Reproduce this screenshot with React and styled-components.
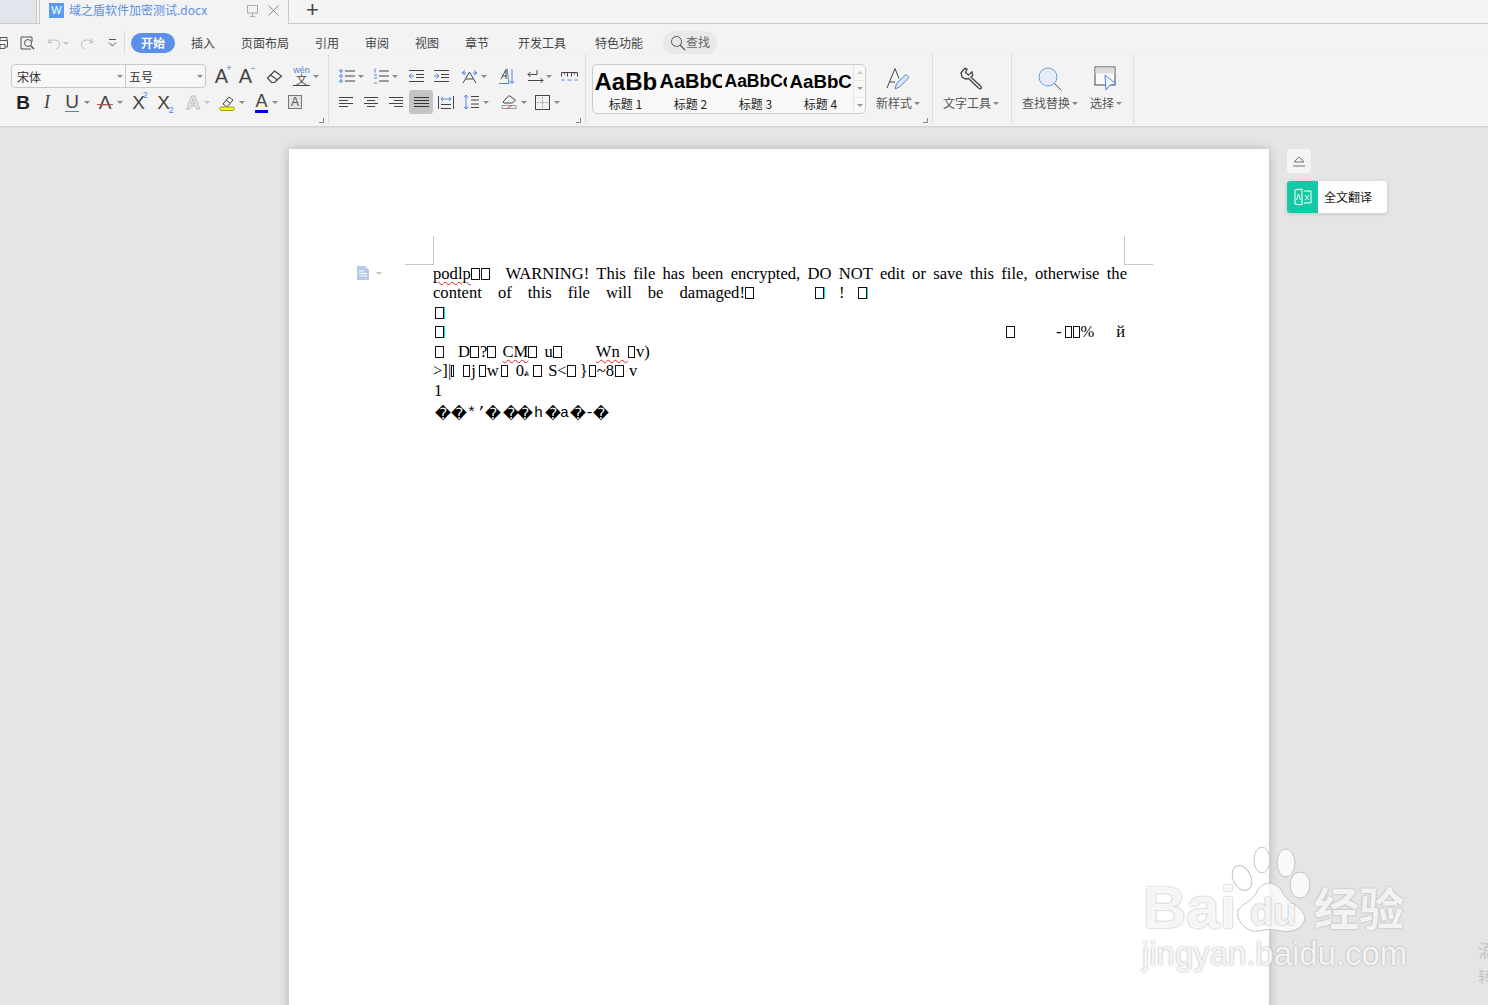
import React from 'react';
import styled, { createGlobalStyle } from 'styled-components';

const ui = '"Noto Sans CJK SC", "Noto Sans", sans-serif';

const Global = createGlobalStyle`
  html, body { margin: 0; padding: 0; height: 100%; overflow: hidden; }
  body { font-family: ${ui}; background: #e5e5e5; }
`;

const Ico = ({ w = 16, h = 16, children }) => (
  <Glyph width={w} height={h} viewBox={`0 0 ${w} ${h}`}>{children}</Glyph>
);

const TABS = [
  ['插入', 16, 24], ['页面布局', 26, 48], ['引用', 26, 24], ['审阅', 26, 24],
  ['视图', 26, 24], ['章节', 26, 24], ['开发工具', 29, 48], ['特色功能', 29, 48],
];

const STYLES = [
  ['AaBb', 24, '标题 1'], ['AaBbC', 20, '标题 2'], ['AaBbCc', 17.5, '标题 3'], ['AaBbC', 18.7, '标题 4'],
];

const App = () => (
  <Page>
    <Global />
    <TabBar>
      <OldTab />
      <ActiveTab>
        <DocBadge>W</DocBadge>
        <TabTitle>域之盾软件加密测试.docx</TabTitle>
        <Slot $l={37} $w={13}>
          <Ico w={13} h={13}><rect x="1.5" y="1.5" width="10" height="7.5" stroke="#aaa" /><path d="M6.5 9v3M4 12.5h5" stroke="#aaa" /></Ico>
        </Slot>
        <Slot $l={8} $w={13}>
          <Ico w={13} h={13}><path d="M1.5 1.5l10 10M11.5 1.5l-10 10" stroke="#888" /></Ico>
        </Slot>
      </ActiveTab>
      <Plus>+</Plus>
    </TabBar>

    <MenuBar>
      <Slot $l={-3} $w={12}>
        <Ico w={12} h={14}><path d="M3 4V1.5h7V4M3 11H.5V4.5h10V11H8M3 8.5h5v4H3z" stroke="#555" /></Ico>
      </Slot>
      <Slot $l={11} $w={15}>
        <Ico w={16} h={15}><path d="M11 13H1V1h11v5" stroke="#555" /><circle cx="8" cy="7" r="3.5" stroke="#555" /><path d="M10.5 9.5l3.5 3.5" stroke="#555" strokeWidth="1.4" /></Ico>
      </Slot>
      <Slot $l={12} $w={13}>
        <Ico w={14} h={13}><path d="M3 1.5L1 5l4 1M1.5 5C4 2.5 11 2 12.5 6c.8 2.500-1 5-3.500 6" stroke="#bbb" /></Ico>
      </Slot>
      <Caret $l={3} $light />
      <Slot $l={11} $w={13}>
        <Ico w={14} h={13}><path d="M11 1.5L13 5 9 6M12.5 5C10 2.5 3 2 1.5 6c-.8 2.500 1 5 3.500 6" stroke="#bbb" /></Ico>
      </Slot>
      <Slot $l={15} $w={9}>
        <Ico w={9} h={10}><path d="M1 1.5h7M1 4.5l3.5 3.5L8 4.5" stroke="#555" /></Ico>
      </Slot>
      <MenuRule />
      <ActivePill>开始</ActivePill>
      {TABS.map(([label, left, width]) => (
        <MenuItem key={label} $l={left} $w={width}>{label}</MenuItem>
      ))}
      <SearchPill>
        <Ico w={16} h={16}><circle cx="6.5" cy="6.5" r="5" stroke="#555" /><path d="M10 10l5 5" stroke="#555" strokeWidth="1.3" /></Ico>
        <SearchText>查找</SearchText>
      </SearchPill>
    </MenuBar>

    <Ribbon>
      <Group $w={329}>
        <Row>
          <Combo>
            <ComboPart $w={114}>宋体<Caret $right /></ComboPart>
            <ComboPart $w={79} $last>五号<Caret $right /></ComboPart>
          </Combo>
          <Slot $l={7} $w={17}><Letter $size={20}>A<Sup>+</Sup></Letter></Slot>
          <Slot $l={7} $w={17}><Letter $size={20}>A<Sup>−</Sup></Letter></Slot>
          <Slot $l={12} $w={17}>
            <Ico w={17} h={15}><path d="M1.500 9l7-7 7 5-7 6.500H5.500z" stroke="#444" strokeWidth="1.2" /><path d="M4.500 6l7 5" stroke="#444" strokeWidth="1.2" /></Ico>
          </Slot>
          <Slot $l={10} $w={17}><Wen><small>wén</small>文</Wen></Slot>
          <Caret $l={3} />
        </Row>
        <Row>
          <Slot $l={14} $w={18}><Letter $size={19} $bold $color="#222">B</Letter></Slot>
          <Slot $l={9} $w={12}><Letter $size={18} $italic $serif>I</Letter></Slot>
          <Slot $l={10} $w={18}><Letter $size={19} $bar="#4a86d8" $barH={1}>U</Letter></Slot>
          <Caret $l={3} />
          <Slot $l={6} $w={18}>
            <Letter $size={19}>A<Strike /></Letter>
          </Slot>
          <Caret $l={3} />
          <Slot $l={6} $w={19}><Letter $size={19}>X<Sup>2</Sup></Letter></Slot>
          <Slot $l={6} $w={19}><Letter $size={19}>X<Sub>2</Sub></Letter></Slot>
          <Slot $l={12} $w={16}><GhostLetter>A</GhostLetter></Slot>
          <Caret $l={3} $light />
          <Slot $l={9} $w={17}>
            <Ico w={17} h={17}>
              <path d="M4 10l6-7 4 3-6 7z" stroke="#444" />
              <path d="M7 6l4 3" stroke="#444" />
              <rect x="1" y="13" width="14" height="3.5" rx="1" fill="#ffff00" stroke="#9a9a30" />
            </Ico>
          </Slot>
          <Caret $l={3} />
          <Slot $l={8} $w={17}><Letter $size={18} $bar="#0000e0" $barH={3}>A</Letter></Slot>
          <Caret $l={2} />
          <Slot $l={9} $w={16}><ClearBox>A</ClearBox></Slot>
        </Row>
        <Launcher />
      </Group>

      <Group $w={257}>
        <Row>
          <Slot $l={10} $w={17}>
            <Ico w={17} h={14}><g stroke="#4a86d8"><circle cx="2" cy="2" r="1.3" /><circle cx="2" cy="7" r="1.3" /><circle cx="2" cy="12" r="1.3" /></g><path d="M6 2h10M6 7h10M6 12h10" stroke="#444" /></Ico>
          </Slot>
          <Caret $l={2} />
          <Slot $l={9} $w={17}>
            <Ico w={17} h={16}><g stroke="#4a86d8"><path d="M2 .5v4M1 10h3M1 15h3" /><path d="M1 7h3" /></g><path d="M6 3h10M6 8h10M6 13h10" stroke="#444" /></Ico>
          </Slot>
          <Caret $l={2} />
          <Slot $l={10} $w={17}>
            <Ico w={17} h={14}><path d="M6 7H1M3.5 4.5L1 7l2.5 2.5" stroke="#4a86d8" /><path d="M1 1.5h15M8 5.5h8M8 8.5h8M1 12.5h15" stroke="#444" /></Ico>
          </Slot>
          <Slot $l={8} $w={17}>
            <Ico w={17} h={14}><path d="M1 7h5M3.5 4.5L6 7 3.5 9.500" stroke="#4a86d8" /><path d="M1 1.500h15M8 5.500h8M8 8.500h8M1 12.500h15" stroke="#444" /></Ico>
          </Slot>
          <Slot $l={11} $w={17}>
            <Ico w={17} h={15}><path d="M1 4l3-2.500M1 4l3 2M1 4h4M16 4l-3-2.500M16 4l-3 2M16 4h-4" stroke="#4a86d8" /><path d="M2 14L8.500 3 15 14M5 10h7" stroke="#444" /></Ico>
          </Slot>
          <Caret $l={3} />
          <Slot $l={11} $w={17}>
            <Ico w={17} h={17}><path d="M1 15.500h10L9 .5" stroke="#4a86d8" /><path d="M3 11L8 1.500V11M4.500 8h4" stroke="#444" /><path d="M14 1v14M12 13l2 2.500 2-2.500" stroke="#4a86d8" /></Ico>
          </Slot>
          <Slot $l={12} $w={17}>
            <Ico w={17} h={15}><path d="M10 1v4.500H1M3.500 3L1 5.500 3.500 8" stroke="#444" /><path d="M1 11.500h15M13.500 9l2.500 2.500-2.500 2.500" stroke="#444" /></Ico>
          </Slot>
          <Caret $l={2} />
          <Slot $l={9} $w={17}>
            <Ico w={17} h={10}><path d="M.5 1.500h16M.5 1.500v4M3.500 1.500v2M6.500 1.500v4M10.500 1.500v4M13.500 1.500v2M16.500 1.500v4" stroke="#444" /><path d="M.5 9h3M6.500 9h4M13.500 9h3" stroke="#4a86d8" /></Ico>
          </Slot>
        </Row>
        <Row>
          <Slot $l={10} $w={15}><Ico w={15} h={13}><path d="M0 1.500h14M0 4.500h9M0 7.500h14M0 10.500h9" stroke="#444" /></Ico></Slot>
          <Slot $l={10} $w={15}><Ico w={15} h={13}><path d="M0 1.500h14M3 4.500h8M0 7.500h14M3 10.500h8" stroke="#444" /></Ico></Slot>
          <Slot $l={10} $w={15}><Ico w={15} h={13}><path d="M0 1.500h14M5 4.500h9M0 7.500h14M5 10.500h9" stroke="#444" /></Ico></Slot>
          <JustifyBtn>
            <Ico w={15} h={13}><path d="M0 1.500h15M0 4.500h15M0 7.500h15M0 10.500h15" stroke="#333" /></Ico>
          </JustifyBtn>
          <Slot $l={5} $w={16}>
            <Ico w={16} h={15}><path d="M.5 1v13M15.500 1v13M3 9.500h10M3 13.500h10" stroke="#444" /><path d="M3 4h10M5 2L3 4l2 2M11 2l2 2-2 2" stroke="#4a86d8" /></Ico>
          </Slot>
          <Slot $l={9} $w={16}>
            <Ico w={16} h={16}><path d="M3 1v14M1 3.500L3 1l2 2.500M1 12.500L3 15l2-2.500" stroke="#4a86d8" /><path d="M8 2.500h8M8 6h8M8 10h8M8 13.500h8" stroke="#444" /></Ico>
          </Slot>
          <Caret $l={4} />
          <Slot $l={12} $w={17}>
            <Ico w={17} h={16}><path d="M2 8l6-6.500L14.500 6l-3 3H3z" stroke="#444" /><path d="M1 11.500h14v3H1z" stroke="#999" /><path d="M5 15l6-3.500" stroke="#d9534f" /></Ico>
          </Slot>
          <Caret $l={3} />
          <Slot $l={8} $w={15}>
            <Ico w={15} h={15}><rect x=".5" y=".5" width="14" height="14" stroke="#444" /><path d="M7.500 2v11M2 7.500h11" stroke="#888" strokeDasharray="1.500 1.500" /></Ico>
          </Slot>
          <Caret $l={4} />
        </Row>
        <Launcher />
      </Group>

      <Group $w={347} $row>
        <Gallery>
          {STYLES.map(([sample, size, label]) => (
            <StyleCell key={label}>
              <Sample $size={size}>{sample}</Sample>
              <StyleName>{label}</StyleName>
            </StyleCell>
          ))}
          <GalleryArrows>
            <ArrowBtn $dir="up" />
            <ArrowBtn $dir="down" />
            <ArrowBtn $dir="more" />
          </GalleryArrows>
        </Gallery>
        <BigButton $l={5} $w={54}>
          <Ico w={26} h={26}>
            <path d="M2 22L10 2.500l4 10M5 16h5" stroke="#444" />
            <path d="M10 23l1.500-5.500L21 8.500l3 3-9.500 9.500z" stroke="#4a86d8" fill="#dce6f7" />
          </Ico>
          <BigLabel>新样式<Caret $l={2} /></BigLabel>
        </BigButton>
        <Launcher />
      </Group>

      <Group $w={79} $row>
        <BigButton $l={8} $w={60}>
          <Ico w={26} h={26}>
            <path d="M3 7l3.500-4.500L9 3 7.500 6.500l3 2.500L14 6l.8 3.500-2 1.500L23 20.500c1 1.500-.5 3-2 2L10.500 12.500 7.500 13 4 11z" stroke="#444" strokeWidth="1.3" />
          </Ico>
          <BigLabel>文字工具<Caret $l={2} /></BigLabel>
        </BigButton>
      </Group>

      <Group $w={122} $row>
        <BigButton $l={8} $w={60}>
          <Ico w={26} h={26}>
            <circle cx="11" cy="11" r="9" stroke="#6d9fe2" fill="#e6ecf7" />
            <path d="M17.500 17.500l7 7" stroke="#555" />
          </Ico>
          <BigLabel>查找替换<Caret $l={2} /></BigLabel>
        </BigButton>
        <BigButton $l={7} $w={38}>
          <Ico w={26} h={26}>
            <rect x="2" y="1" width="20" height="18" stroke="#444" fill="#fafafa" />
            <rect x="2.500" y="1.500" width="19" height="6" fill="#ddd" stroke="none" />
            <path d="M12 9l11 9-6 1-4 5z" stroke="#4a86d8" fill="#f4f7fc" />
          </Ico>
          <BigLabel>选择<Caret $l={2} /></BigLabel>
        </BigButton>
      </Group>
    </Ribbon>

    <Workspace>
      <Paper>
        <Crop $side="left" />
        <Crop $side="right" />
        <Gutter>
          <Ico w={14} h={14}>
            <path d="M1 0h8l4 4v10H1z" fill="#b6c9e8" stroke="none" />
            <path d="M3 5h5M3 7.500h8M3 10h8" stroke="#fff" />
          </Ico>
          <Caret $l={6} $light />
        </Gutter>
        <Doc>
          <Justified><Wavy>podlp</Wavy><Tofu /><Tofu /> &nbsp;WARNING! This file has been encrypted, DO NOT edit or save this file, otherwise the</Justified>
          <Line>
            <Words>content of this file will be damaged!</Words><Tofu />
            <Gap $w={60} /><Tofu $cyan /><Gap $w={14} />!<Gap $w={14} /><Tofu $cyan />
          </Line>
          <Line><Gap $w={2} /><Tofu $cyan $heavy /></Line>
          <Line>
            <Gap $w={2} /><Tofu $cyan $heavy /><Gap $w={561} /><Tofu />
            <Gap $w={40} />-<Gap $w={3} /><Tofu $narrow /><Tofu $narrow />%<Gap $w={22} />й
          </Line>
          <Line>
            <Gap $w={2} /><Tofu /><Gap $w={13} />D<Tofu />?<Tofu /> <Gap $w={1} /><Wavy>CM</Wavy><Tofu /> <Gap $w={2} />u<Tofu />
            <Gap $w={33} /><Wavy>Wn&nbsp;&nbsp;</Wavy><Tofu $narrow />v)
          </Line>
          <Line>
            &gt;]|<Tofu $thin /><Gap $w={8} /><Tofu $narrow />j<Gap $w={3} /><Tofu $narrow />w<Gap $w={2} /><Tofu $narrow /><Gap $w={7} />0<SmallMark>ል</SmallMark><Gap $w={4} /><Tofu /><Gap $w={5} />S&lt;<Tofu /><Gap $w={3} />}<Gap $w={1} /><Tofu $narrow />~8<Gap $w={1} /><Tofu /><Gap $w={4} />v
          </Line>
          <Line><Gap $w={1} />1</Line>
          <LastLine>
            <Cell $w={16}>�</Cell><Cell $w={16}>�</Cell><Cell $w={10} $plain>*</Cell><Cell $w={8} $plain>’</Cell>
            <Cell $w={18}>�</Cell><Cell $w={14}>�</Cell><Cell $w={17}>�</Cell><Cell $w={11} $plain>h</Cell>
            <Cell $w={15}>�</Cell><Cell $w={10} $plain>a</Cell><Cell $w={15}>�</Cell><Cell $w={8} $plain>-</Cell><Cell $w={15}>�</Cell>
          </LastLine>
        </Doc>
      </Paper>
      <SideRail>
        <CollapseBtn>
          <Ico w={14} h={11}><path d="M2 6l5-5 5 5zM1 10h12" stroke="#777" /></Ico>
        </CollapseBtn>
        <TranslateBtn>
          <TranslateBadge>
            <Ico w={18} h={18}>
              <path d="M1 2l7-1v16l-7-1z" stroke="#fff" />
              <path d="M10 3h7v12h-7" stroke="#fff" />
              <path d="M2.500 12l2-6 2 6M11 7l4 5M15 7l-4 5" stroke="#fff" />
            </Ico>
          </TranslateBadge>
          <TranslateLabel>全文翻译</TranslateLabel>
        </TranslateBtn>
      </SideRail>
    </Workspace>

    <Watermark>
      <Paw width="86" height="90" viewBox="0 0 86 90">
        <g fill="#fff" fillOpacity=".75" stroke="#c4c4c4">
          <ellipse cx="12" cy="33" rx="9" ry="13" transform="rotate(-25 12 33)" />
          <ellipse cx="32" cy="15" rx="8" ry="13" />
          <ellipse cx="56" cy="18" rx="9" ry="14" />
          <ellipse cx="70" cy="40" rx="10" ry="13" />
          <path d="M8 72c-3-14 14-12 20-27 5-9 17-9 23 0 6 14 22 15 24 28-1 12-16 15-24 13-9-2-13-2-22 0-9 2-18-5-21-14z" />
        </g>
      </Paw>
      <WmBai>Bai</WmBai>
      <WmDu>du</WmDu>
      <WmCn>经验</WmCn>
      <WmUrl>jingyan.baidu.com</WmUrl>
    </Watermark>
    <EdgeMark>滴<br /><small>转</small></EdgeMark>
  </Page>
);

export default App;

const Page = styled.div`
  width: 1488px;
  height: 1005px;
  display: flex;
  flex-direction: column;
  overflow: hidden;
  position: relative;
  background: #e5e5e5;
`;

const Glyph = styled.svg`
  display: block;
  fill: none;
  flex: none;
`;

const Slot = styled.span`
  flex: none;
  display: flex;
  align-items: center;
  justify-content: center;
  width: ${p => p.$w}px;
  margin-left: ${p => p.$l || 0}px;
`;

const Caret = styled.i`
  flex: none;
  display: inline-block;
  width: 0;
  height: 0;
  border-left: 3px solid transparent;
  border-right: 3px solid transparent;
  border-top: 3px solid ${p => (p.$light ? '#c4c4c4' : '#888')};
  margin-left: ${p => (p.$right ? 'auto' : `${p.$l || 0}px`)};
  margin-right: ${p => (p.$right ? '2px' : 0)};
`;

const TabBar = styled.div`
  height: 23px;
  flex: none;
  display: flex;
  align-items: flex-start;
  background: #f4f4f5;
  border-bottom: 1px solid #c9c9c9;
`;

const OldTab = styled.div`
  width: 36px;
  height: 23px;
  background: #e1e5ec;
  border-right: 1px solid #c9c9c9;
`;

const ActiveTab = styled.div`
  width: 250px;
  margin-left: 2px;
  height: 24px;
  padding: 0 0 4px 9px;
  box-sizing: border-box;
  display: flex;
  align-items: center;
  background: #f3f3f3;
  border-left: 1px solid #c9c9c9;
  border-right: 1px solid #c9c9c9;
`;

const DocBadge = styled.span`
  width: 15px;
  height: 15px;
  flex: none;
  background: #5a9bf0;
  color: #fff;
  font: 11px/15px "Liberation Sans", sans-serif;
  text-align: center;
`;

const TabTitle = styled.span`
  margin-left: 5px;
  width: 140px;
  font-size: 12px;
  line-height: 16px;
  color: #5b8fe0;
  white-space: nowrap;
`;

const Plus = styled.span`
  margin-left: 17px;
  font: 300 22px/20px "Liberation Sans", sans-serif;
  color: #444;
`;

const MenuBar = styled.div`
  height: 30px;
  flex: none;
  box-sizing: border-box;
  padding-top: 8px;
  display: flex;
  align-items: center;
  background: #f3f3f3;
`;

const MenuRule = styled.span`
  width: 1px;
  height: 24px;
  margin-left: 7px;
  background: #dcdcdc;
`;

const ActivePill = styled.span`
  width: 44px;
  height: 20px;
  margin-left: 6px;
  border-radius: 10px;
  background: #5b8fe8;
  color: #fff;
  font-size: 12px;
  font-weight: 700;
  line-height: 20px;
  text-align: center;
`;

const MenuItem = styled.span`
  width: ${p => p.$w}px;
  margin-left: ${p => p.$l}px;
  font-size: 12px;
  line-height: 20px;
  color: #444;
  white-space: nowrap;
`;

const SearchPill = styled.span`
  width: 54px;
  height: 24px;
  margin-left: 20px;
  padding-left: 7px;
  box-sizing: border-box;
  display: flex;
  align-items: center;
  border-radius: 12px;
  background: #e8e9eb;
  color: #666;
  font-size: 12px;
  white-space: nowrap;
`;

const SearchText = styled.span`
  line-height: 16px;
  margin-bottom: 2px;
`;

const Ribbon = styled.div`
  height: 72px;
  flex: none;
  display: flex;
  background: #f3f3f3;
  box-shadow: 0 1px 2px rgba(0, 0, 0, 0.12);
  position: relative;
  z-index: 1;
`;

const Group = styled.div`
  width: ${p => p.$w}px;
  flex: none;
  box-sizing: border-box;
  position: relative;
  display: flex;
  flex-direction: ${p => (p.$row ? 'row' : 'column')};
  padding-top: 10px;
  margin-bottom: 2px;
  border-right: 1px solid #dfdfdf;
`;

const Launcher = styled.i`
  position: absolute;
  right: 4px;
  bottom: 1px;
  width: 4px;
  height: 4px;
  border-right: 1px solid #888;
  border-bottom: 1px solid #888;
`;

const Row = styled.div`
  height: 24px;
  margin-bottom: 2px;
  display: flex;
  align-items: center;
`;

const Combo = styled.div`
  width: 195px;
  height: 24px;
  box-sizing: border-box;
  margin-left: 11px;
  flex: none;
  display: flex;
  border: 1px solid #c8c8c8;
  border-radius: 4px;
  background: #f8f8f8;
`;

const ComboPart = styled.span`
  width: ${p => p.$w}px;
  box-sizing: border-box;
  padding-left: ${p => (p.$last ? 3 : 5)}px;
  display: flex;
  align-items: center;
  font-size: 12px;
  color: #333;
  border-right: ${p => (p.$last ? 'none' : '1px solid #c8c8c8')};
`;

const Letter = styled.span`
  position: relative;
  display: inline-block;
  font-family: ${p => (p.$serif ? '"Liberation Serif"' : '"Liberation Sans"')}, sans-serif;
  font-size: ${p => p.$size}px;
  line-height: ${p => p.$size}px;
  font-weight: ${p => (p.$bold ? 700 : 400)};
  font-style: ${p => (p.$italic ? 'italic' : 'normal')};
  color: ${p => p.$color || '#444'};
  white-space: nowrap;
  ${p => p.$bar && `border-bottom: ${p.$barH}px solid ${p.$bar};`}
`;

const GhostLetter = styled.span`
  font: 700 19px/19px "Liberation Sans", sans-serif;
  color: #f3f3f3;
  -webkit-text-stroke: 1px #bdbdbd;
`;

const Strike = styled.i`
  position: absolute;
  left: -2px;
  right: -2px;
  top: 60%;
  height: 1px;
  background: #c0504d;
`;

const Sup = styled.sup`
  position: absolute;
  left: 100%;
  top: -3px;
  margin-left: -2px;
  font-size: 9px;
  line-height: 10px;
  color: #4a86d8;
`;

const Sub = styled.sub`
  position: absolute;
  left: 100%;
  bottom: -3px;
  margin-left: -1px;
  font-size: 9px;
  line-height: 10px;
  color: #4a86d8;
`;

const Wen = styled.span`
  display: flex;
  flex-direction: column;
  align-items: center;
  font-size: 11px;
  line-height: 11px;
  color: #444;
  border-bottom: 1px solid #444;
  & small {
    font: 9px/8px "Liberation Sans", sans-serif;
    color: #4a86d8;
  }
`;

const ClearBox = styled.span`
  width: 14px;
  height: 14px;
  box-sizing: border-box;
  border: 1px solid #777;
  background: #e4e4e4;
  color: #555;
  font: 12px/12px "Liberation Sans", sans-serif;
  text-align: center;
`;

const JustifyBtn = styled.span`
  width: 24px;
  height: 24px;
  margin-left: 5px;
  flex: none;
  display: flex;
  align-items: center;
  justify-content: center;
  border-radius: 3px;
  background: #c4c4c4;
`;

const Gallery = styled.div`
  width: 274px;
  height: 50px;
  margin-left: 6px;
  flex: none;
  box-sizing: border-box;
  display: flex;
  border: 1px solid #ccc;
  border-radius: 5px;
  background: #f8f8f8;
`;

const StyleCell = styled.div`
  width: 65px;
  flex: none;
  display: flex;
  flex-direction: column;
  align-items: center;
`;

const Sample = styled.div`
  width: 62px;
  height: 32px;
  overflow: hidden;
  font: 700 ${p => p.$size}px/33px "Liberation Sans", sans-serif;
  color: #000;
  white-space: nowrap;
`;

const StyleName = styled.div`
  font-size: 12px;
  line-height: 14px;
  color: #222;
`;

const GalleryArrows = styled.div`
  width: 13px;
  margin-left: auto;
  display: flex;
  flex-direction: column;
  border-left: 1px solid #e4e4e4;
`;

const ArrowBtn = styled.i`
  flex: 1;
  display: flex;
  align-items: center;
  justify-content: center;
  border-bottom: ${p => (p.$dir === 'more' ? 'none' : '1px solid #e8e8e8')};
  &::after {
    content: '';
    width: 0;
    height: 0;
    border-left: 3px solid transparent;
    border-right: 3px solid transparent;
    ${p => (p.$dir === 'up' ? 'border-bottom: 3px solid #ccc;' : 'border-top: 3px solid #999;')}
  }
`;

const BigButton = styled.div`
  width: ${p => p.$w}px;
  margin-left: ${p => p.$l}px;
  flex: none;
  display: flex;
  flex-direction: column;
  align-items: center;
  padding-top: 2px;
`;

const BigLabel = styled.div`
  margin-top: 3px;
  display: flex;
  align-items: center;
  font-size: 12px;
  line-height: 16px;
  color: #555;
  white-space: nowrap;
`;

const Workspace = styled.div`
  flex: 1;
  min-height: 0;
  display: flex;
  align-items: flex-start;
  padding: 23px 0 0 289px;
`;

const Paper = styled.div`
  width: 980px;
  height: 900px;
  flex: none;
  box-sizing: border-box;
  position: relative;
  padding: 115px 0 0 144px;
  background: #fff;
  box-shadow: 0 0 10px rgba(0, 0, 0, 0.22);
`;

const Crop = styled.i`
  position: absolute;
  top: 87px;
  width: 28px;
  height: 28px;
  border-bottom: 1px solid #c8c8c8;
  ${p => (p.$side === 'left'
    ? 'left: 116px; border-right: 1px solid #c8c8c8;'
    : 'left: 835px; border-left: 1px solid #c8c8c8;')}
`;

const Gutter = styled.div`
  position: absolute;
  left: 67px;
  top: 117px;
  display: flex;
  align-items: center;
`;

const Doc = styled.div`
  width: 694px;
  font-family: "Liberation Serif", "Times New Roman", serif;
  font-size: 16.6px;
  line-height: 19.5px;
  color: #000;
`;

const Justified = styled.div`
  height: 19.2px;
  text-align: justify;
  text-align-last: justify;
  white-space: normal;
`;

const Line = styled.div`
  height: 19.5px;
  white-space: pre;
`;

const Words = styled.span`
  word-spacing: 11.9px;
`;

const Gap = styled.span`
  display: inline-block;
  width: ${p => p.$w}px;
`;

const tofuWidth = p => (p.$thin ? 1 : p.$narrow ? 5 : 7);

const Tofu = styled.span`
  display: inline-block;
  width: ${tofuWidth}px;
  height: 10px;
  margin-right: 1px;
  vertical-align: -1px;
  border: 1px solid #111;
  box-shadow: ${p => (p.$cyan ? '1px 0 0 #14e0ea' : 'none')};
  ${p => p.$heavy && 'border-width: 1.5px;'}
`;

const Wavy = styled.span`
  text-decoration: underline wavy #e02020 1px;
  text-underline-offset: 2px;
`;

const SmallMark = styled.span`
  font-family: "DejaVu Sans", sans-serif;
  font-size: 8px;
`;

const LastLine = styled.div`
  margin-top: 3.3px;
  margin-left: 2px;
  display: flex;
  height: 22px;
  align-items: center;
`;

const Cell = styled.span`
  width: ${p => p.$w}px;
  flex: none;
  font-family: ${p => (p.$plain ? '"Liberation Mono", monospace' : '"DejaVu Sans", sans-serif')};
  font-size: ${p => (p.$plain ? 15 : 15.5)}px;
  line-height: 22px;
  color: #000;
`;

const SideRail = styled.div`
  margin-left: 18px;
  display: flex;
  flex-direction: column;
  gap: 8px;
`;

const CollapseBtn = styled.div`
  width: 24px;
  height: 24px;
  display: flex;
  align-items: center;
  justify-content: center;
  border-radius: 3px;
  background: #f4f4f4;
`;

const TranslateBtn = styled.div`
  width: 100px;
  height: 32px;
  display: flex;
  border-radius: 3px;
  background: #fff;
  box-shadow: 0 1px 4px rgba(0, 0, 0, 0.14);
  overflow: hidden;
`;

const TranslateBadge = styled.span`
  width: 31px;
  display: flex;
  align-items: center;
  justify-content: center;
  background: #15c9a4;
`;

const TranslateLabel = styled.span`
  margin-left: 6px;
  font-size: 12px;
  line-height: 32px;
  color: #111;
  white-space: nowrap;
`;

const Watermark = styled.div`
  position: absolute;
  left: 1140px;
  top: 845px;
  width: 270px;
  height: 130px;
  text-shadow: 0 0 2px #999;
  color: rgba(255, 255, 255, 0.9);
  font-family: "Liberation Sans", sans-serif;
`;

const Paw = styled.svg`
  position: absolute;
  left: 90px;
  top: 0;
`;

const WmBai = styled.span`
  position: absolute;
  left: 3px;
  top: 28px;
  font-size: 60px;
  line-height: 70px;
  font-weight: 700;
`;

const WmDu = styled.span`
  position: absolute;
  left: 110px;
  top: 39px;
  font-size: 38px;
  line-height: 56px;
  font-weight: 700;
`;

const WmCn = styled.span`
  position: absolute;
  left: 174px;
  top: 32px;
  font-family: ${ui};
  font-size: 45px;
  line-height: 60px;
  font-weight: 700;
`;

const WmUrl = styled.span`
  position: absolute;
  left: 2px;
  top: 90px;
  font-size: 32.9px;
  line-height: 38px;
  white-space: nowrap;
`;

const EdgeMark = styled.div`
  position: absolute;
  left: 1478px;
  top: 938px;
  font-size: 19px;
  line-height: 24px;
  color: #c4c4c4;
  & small {
    font-size: 15px;
  }
`;
